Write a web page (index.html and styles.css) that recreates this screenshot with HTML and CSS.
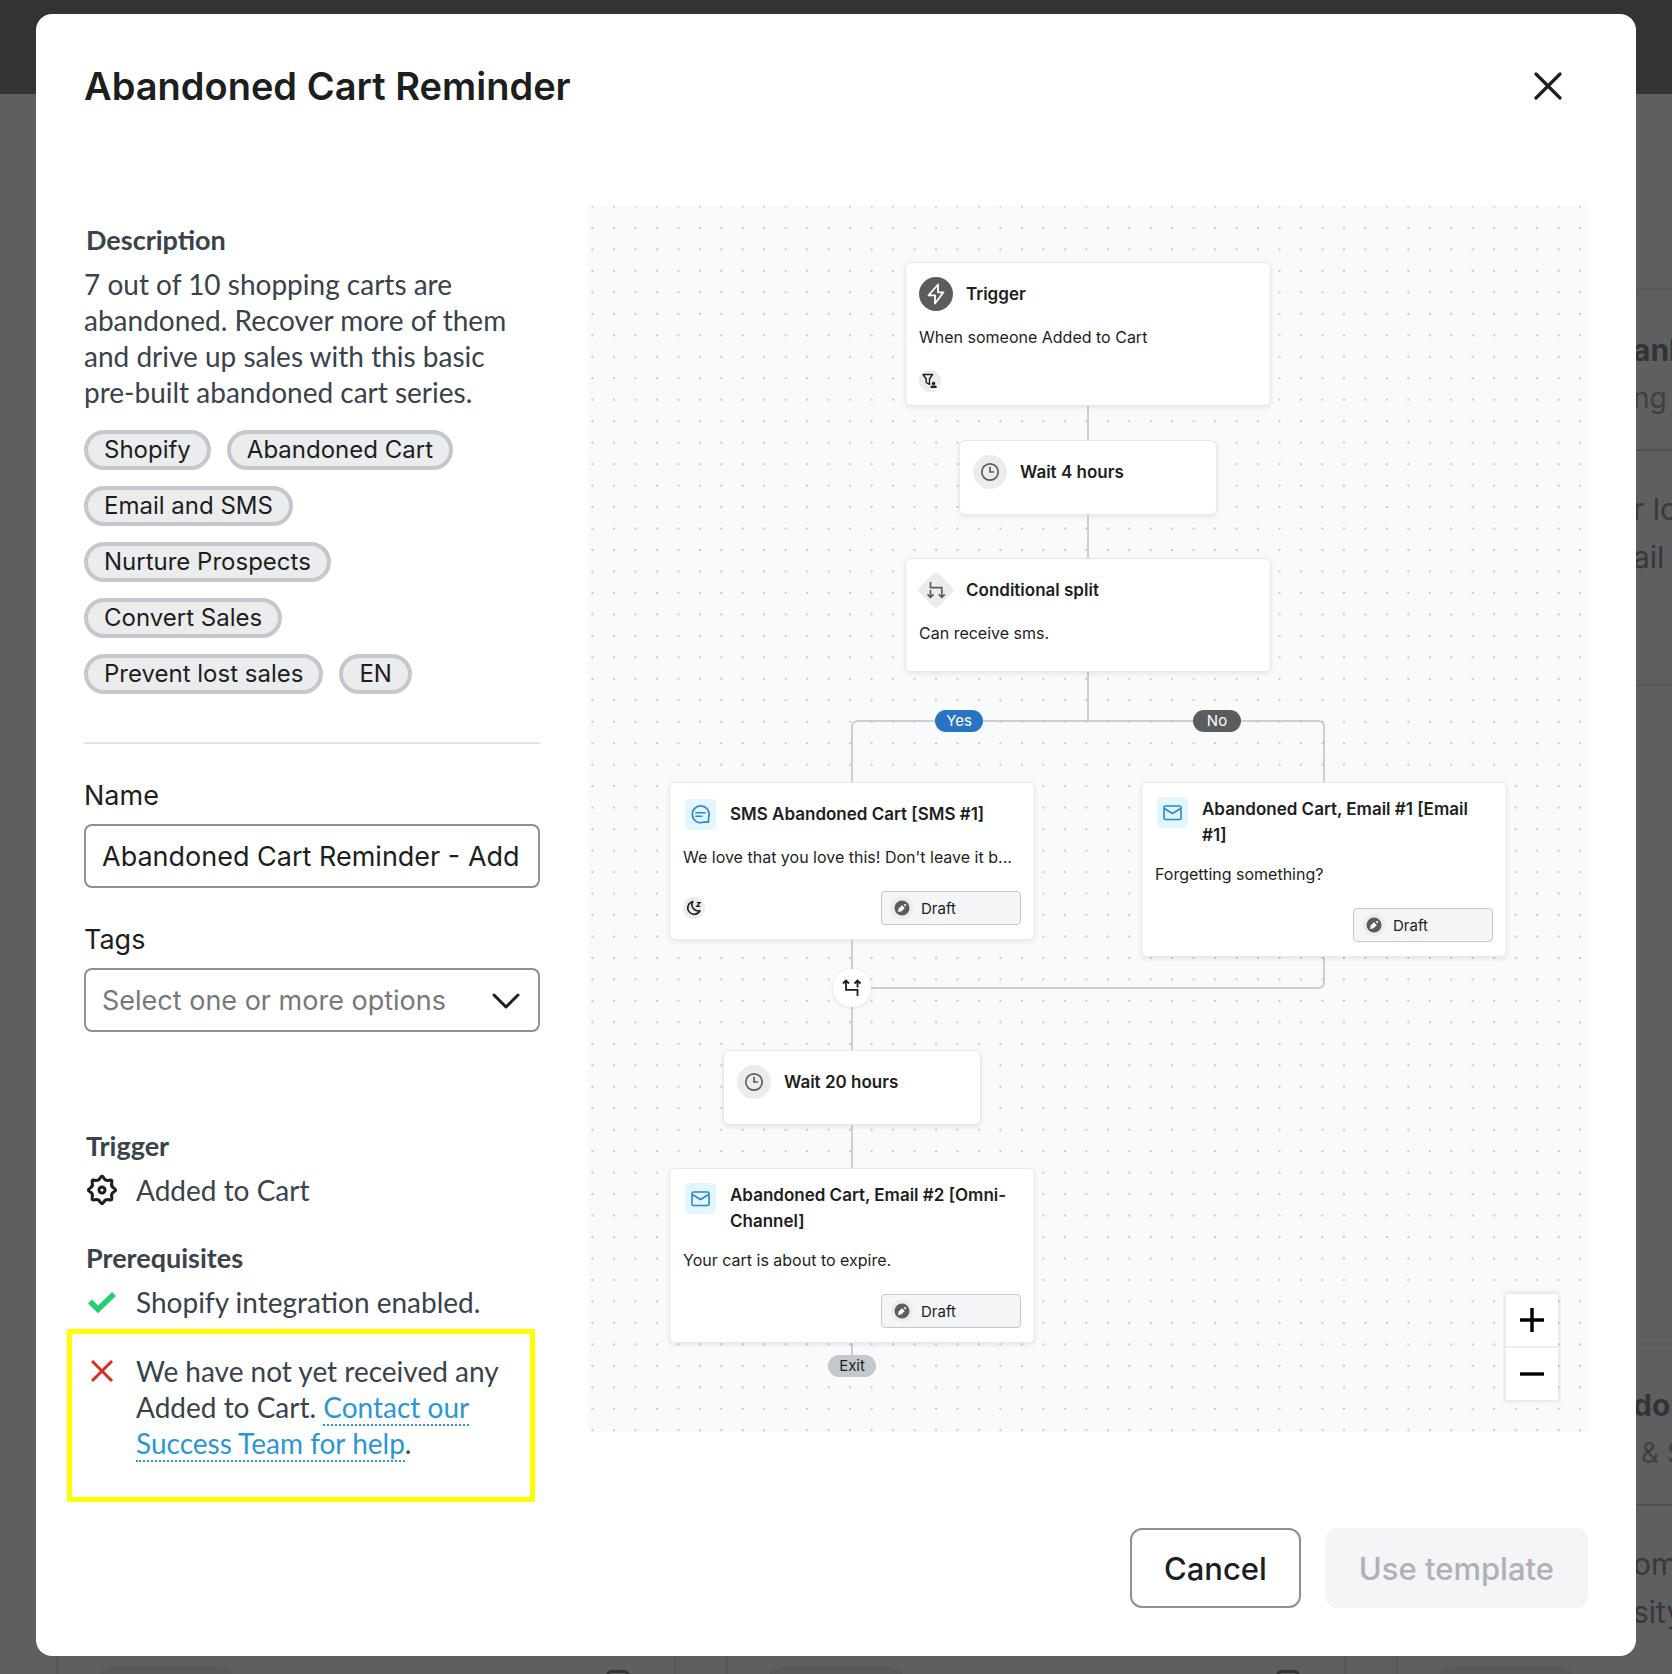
FILE: index.html
```html
<!DOCTYPE html>
<html lang="en">
<head>
    <meta charset="UTF-8">
    <meta name="viewport" content="width=device-width, initial-scale=1.0">
    <title>Abandoned Cart Reminder</title>
    <link rel="stylesheet" href="styles.css">
</head>
<body>
    <!-- Dimmed page behind the dialog -->
    <div class="page" aria-hidden="true">
        <div class="page-header"></div>
        <div class="page-toolbar"></div>
        <div class="page-cards">
            <div class="page-card short"></div>
            <div class="page-card short"></div>
            <div class="page-card short">
                <div class="page-card-head">
                    <div class="page-card-title">ank</div>
                    <div class="page-card-type">ng</div>
                </div>
                <div class="page-card-text">r lo<br>ail p</div>
            </div>
            <div class="page-card tall">
                <div class="page-card-foot"><span class="page-pill"></span><span class="page-box"></span></div>
            </div>
            <div class="page-card tall">
                <div class="page-card-foot"><span class="page-pill"></span><span class="page-box"></span></div>
            </div>
            <div class="page-card tall">
                <div class="page-card-head">
                    <div class="page-card-title">don</div>
                    <div class="page-card-type">&nbsp;&amp; S</div>
                </div>
                <div class="page-card-text">ome<br>sity</div>
                <div class="page-card-foot"><span class="page-pill"></span></div>
            </div>
        </div>
    </div>

    <div class="modal" role="dialog" aria-labelledby="modal-title">
        <header class="modal-header">
            <h1 id="modal-title">Abandoned Cart Reminder</h1>
            <button class="close" type="button" aria-label="Close">
                <svg width="28" height="28" viewBox="0 0 28 28"><path d="M2 2l24 24M26 2L2 26" fill="none" stroke="#1d1e20" stroke-width="3.2" stroke-linecap="round"/></svg>
            </button>
        </header>

        <div class="modal-body">
            <section class="details">
                <h2>Description</h2>
                <p class="description">7 out of 10 shopping carts are abandoned. Recover more of them and drive up sales with this basic pre-built abandoned cart series.</p>
                <ul class="chips">
                    <li>Shopify</li>
                    <li>Abandoned Cart</li>
                    <li>Email and SMS</li>
                    <li>Nurture Prospects</li>
                    <li>Convert Sales</li>
                    <li>Prevent lost sales</li>
                    <li>EN</li>
                </ul>
                <hr>
                <div class="field">
                    <label for="name">Name</label>
                    <input id="name" type="text" value="Abandoned Cart Reminder - Add">
                </div>
                <div class="field">
                    <label for="tags">Tags</label>
                    <div class="select">
                        <select id="tags">
                            <option>Select one or more options</option>
                        </select>
                        <svg class="chevron" width="28" height="18" viewBox="0 0 28 18"><path d="M2 3l12 12L26 3" fill="none" stroke="#1d1e20" stroke-width="3" stroke-linecap="round" stroke-linejoin="round"/></svg>
                    </div>
                </div>

                <h2 class="trigger-title">Trigger</h2>
                <div class="item">
                    <svg class="item-icon" viewBox="-16 -16 32 32"><path d="M-1.8-12Q0-15.3 1.8-12Q3.6-8.7 7.2-9.75Q10.8-10.8 9.75-7.2Q8.7-3.6 12-1.8Q15.3 0 12 1.8Q8.7 3.6 9.75 7.2Q10.8 10.8 7.2 9.75Q3.6 8.7 1.8 12Q0 15.3-1.8 12Q-3.6 8.7-7.2 9.75Q-10.8 10.8-9.75 7.2Q-8.7 3.6-12 1.8Q-15.3 0-12-1.8Q-8.7-3.6-9.75-7.2Q-10.8-10.8-7.2-9.75Q-3.6-8.7-1.8-12z" fill="none" stroke="#1d1e20" stroke-width="3"/><circle r="3" fill="none" stroke="#1d1e20" stroke-width="3"/></svg>
                    <p>Added to Cart</p>
                </div>

                <h2 class="prereq-title">Prerequisites</h2>
                <div class="item">
                    <svg class="item-icon" viewBox="0 0 32 32"><path d="M4 15.500l8 8L28 8" fill="none" stroke="#23cf73" stroke-width="5.5"/></svg>
                    <p>Shopify integration enabled.</p>
                </div>
                <div class="item highlighted">
                    <svg class="item-icon" viewBox="0 0 32 32"><path d="M6 6l20 20M26 6L6 26" fill="none" stroke="#d4301c" stroke-width="3"/></svg>
                    <p>We have not yet received any Added to Cart. <a href="#">Contact our Success Team for help</a>.</p>
                </div>
            </section>

            <section class="canvas">
                <svg class="dots" width="100%" height="100%">
                    <defs>
                        <pattern id="dot" width="21.47" height="21.47" patternUnits="userSpaceOnUse" x="3.5" y="-0.5"><circle cx="1" cy="1" r="0.8" fill="#85888d"/></pattern>
                    </defs>
                    <rect width="100%" height="100%" fill="url(#dot)"/>
                </svg>

                <div class="flow">
                    <svg class="edges" width="1000" height="1226" viewBox="0 0 1000 1226" fill="none" stroke="#bfc1c4" stroke-width="1.5">
                        <path d="M500 190V514"/>
                        <path d="M264 590V521Q264 515 270 515H730Q736 515 736 521V590"/>
                        <path d="M264 700V1160"/>
                        <path d="M736 740V776Q736 782 730 782H264"/>
                    </svg>

                    <article class="node node-trigger">
                        <div class="node-head">
                            <span class="badge dark"><svg width="34" height="34" viewBox="0 0 34 34"><path d="M19 7.5L9.5 18.3H16V26.5L24.5 15.3H19z" fill="none" stroke="#fff" stroke-width="1.8" stroke-linejoin="round"/></svg></span>
                            <h3>Trigger</h3>
                        </div>
                        <p>When someone Added to Cart</p>
                        <div class="node-foot">
                            <span class="mini"><svg width="22" height="22" viewBox="0 0 22 22"><path d="M4 4.5h9.5L10.500 9v5.500L7.200 12.500V9z" fill="none" stroke="#1d1e20" stroke-width="1.4" stroke-linejoin="round"/><circle cx="14.6" cy="13.4" r="1.7" fill="#1d1e20"/><path d="M11.6 18v-1.200q0-1.400 1.500-1.400h3q1.500 0 1.500 1.400V18z" fill="#1d1e20"/></svg></span>
                        </div>
                    </article>

                    <article class="node node-wait node-wait-4">
                        <div class="node-head">
                            <span class="badge"><svg width="34" height="34" viewBox="0 0 34 34" fill="none" stroke="#5b5c5e" stroke-width="1.7"><circle cx="17" cy="17" r="8.2"/><path d="M17 11.8V17h4.2"/></svg></span>
                            <h3>Wait 4 hours</h3>
                        </div>
                    </article>

                    <article class="node node-split">
                        <div class="node-head">
                            <span class="badge diamond"><svg width="38" height="38" viewBox="0 0 38 38"><rect x="5.5" y="5.5" width="27" height="27" rx="4" transform="rotate(45 19 19)" fill="#ebecee"/><path d="M13.5 11v5.7h11.3V26M13.5 19v7M10.5 23.3l3 3 3-3M21.8 23.3l3 3 3-3" fill="none" stroke="#5b5c5e" stroke-width="1.7"/></svg></span>
                            <h3>Conditional split</h3>
                        </div>
                        <p>Can receive sms.</p>
                    </article>

                    <span class="label label-yes">Yes</span>
                    <span class="label label-no">No</span>

                    <article class="node node-sms">
                        <div class="node-head">
                            <span class="badge blue"><svg width="31" height="31" viewBox="0 0 31 31" fill="none" stroke="#2a84d2" stroke-width="1.6"><path d="M23.5 18.5a8.4 8.4 0 1 0-4.6 4.6h4.6z" stroke-linejoin="round"/><path d="M11 13.7h9M11 17.2h6" stroke-linecap="round"/></svg></span>
                            <h3>SMS Abandoned Cart [SMS #1]</h3>
                        </div>
                        <p>We love that you love this! Don't leave it b...</p>
                        <div class="node-foot">
                            <span class="mini"><svg width="22" height="22" viewBox="0 0 22 22"><path d="M9.8 4.5a6.5 6.5 0 1 0 7.3 9.2A6.3 6.3 0 0 1 9.8 4.5z" fill="none" stroke="#1d1e20" stroke-width="1.6" stroke-linejoin="round"/><path d="M13.8 5.700h3.200l-3.200 3.600h3.400" fill="none" stroke="#1d1e20" stroke-width="1.3"/></svg></span>
                            <span class="status"><svg width="22" height="22" viewBox="0 0 22 22"><circle cx="11" cy="11" r="11" fill="#ebecee"/><circle cx="11" cy="11" r="7.5" fill="#5b5c5e"/><path d="M7 15l.7-3.6 3.2-3.2 2.9 2.9-3.2 3.2z" fill="#fff"/><path d="M12.6 7.8l1.5-1 1.2 1.2-1 1.5z" fill="#fff"/></svg>Draft</span>
                        </div>
                    </article>

                    <article class="node node-email-1">
                        <div class="node-head two-lines">
                            <span class="badge blue"><svg width="31" height="31" viewBox="0 0 31 31" fill="none" stroke="#2a84d2" stroke-width="1.6"><rect x="7" y="9" width="17" height="13.5" rx="1.5"/><path d="M7.3 11.5l8.2 5 8.2-5"/></svg></span>
                            <h3>Abandoned Cart, Email #1 [Email #1]</h3>
                        </div>
                        <p>Forgetting something?</p>
                        <div class="node-foot">
                            <span class="status"><svg width="22" height="22" viewBox="0 0 22 22"><circle cx="11" cy="11" r="11" fill="#ebecee"/><circle cx="11" cy="11" r="7.5" fill="#5b5c5e"/><path d="M7 15l.7-3.6 3.2-3.2 2.9 2.9-3.2 3.2z" fill="#fff"/><path d="M12.6 7.8l1.5-1 1.2 1.2-1 1.5z" fill="#fff"/></svg>Draft</span>
                        </div>
                    </article>

                    <span class="merge"><svg width="20" height="20" viewBox="0 0 20 20" fill="none" stroke="#1d1e20" stroke-width="1.8"><path d="M4 2.5v9.3h11.5V18M15.5 2.5v7M1 5.5l3-3 3 3M12.5 5.5l3-3 3 3"/></svg></span>

                    <article class="node node-wait node-wait-20">
                        <div class="node-head">
                            <span class="badge"><svg width="34" height="34" viewBox="0 0 34 34" fill="none" stroke="#5b5c5e" stroke-width="1.7"><circle cx="17" cy="17" r="8.2"/><path d="M17 11.8V17h4.2"/></svg></span>
                            <h3>Wait 20 hours</h3>
                        </div>
                    </article>

                    <article class="node node-email-2">
                        <div class="node-head two-lines">
                            <span class="badge blue"><svg width="31" height="31" viewBox="0 0 31 31" fill="none" stroke="#2a84d2" stroke-width="1.6"><rect x="7" y="9" width="17" height="13.5" rx="1.5"/><path d="M7.3 11.5l8.2 5 8.2-5"/></svg></span>
                            <h3>Abandoned Cart, Email #2 [Omni-Channel]</h3>
                        </div>
                        <p>Your cart is about to expire.</p>
                        <div class="node-foot">
                            <span class="status"><svg width="22" height="22" viewBox="0 0 22 22"><circle cx="11" cy="11" r="11" fill="#ebecee"/><circle cx="11" cy="11" r="7.5" fill="#5b5c5e"/><path d="M7 15l.7-3.6 3.2-3.2 2.9 2.9-3.2 3.2z" fill="#fff"/><path d="M12.6 7.8l1.5-1 1.2 1.2-1 1.5z" fill="#fff"/></svg>Draft</span>
                        </div>
                    </article>

                    <span class="label label-exit">Exit</span>
                </div>

                <div class="zoom">
                    <button type="button" aria-label="Zoom in"><svg width="24" height="24" viewBox="0 0 24 24"><path d="M12 0v24M0 12h24" stroke="#000" stroke-width="3.4"/></svg></button>
                    <button type="button" aria-label="Zoom out"><svg width="24" height="24" viewBox="0 0 24 24"><path d="M0 12h24" stroke="#000" stroke-width="3.4"/></svg></button>
                </div>
            </section>
        </div>

        <footer class="modal-footer">
            <button class="btn cancel" type="button">Cancel</button>
            <button class="btn use" type="button" disabled>Use template</button>
        </footer>
    </div>
</body>
</html>
```
FILE: styles.css
```css
* {
    box-sizing: border-box;
}

body {
    margin: 0;
    background-color: #5e5f61;
    font-family: Inter, "Liberation Sans", sans-serif;
    color: #1d1e20;
    display: flow-root;
    position: relative;
}

h1, h2, h3, p, ul {
    margin: 0;
    padding: 0;
}

button {
    font-family: inherit;
    cursor: pointer;
}

/* Page behind the dialog */
.page {
    position: absolute;
    inset: 0;
    overflow: hidden;
    color: #3e3f42;
}

.page-header {
    height: 94px;
    background-color: #323335;
}

.page-toolbar {
    height: 193px;
    border-bottom: 1px solid #5a5b5d;
}

.page-cards {
    display: grid;
    grid-template-columns: repeat(3, 620px);
    grid-template-rows: 398px 400px;
    column-gap: 50px;
    row-gap: 657px;
    margin: 1px 0 0 56px;
}

.page-card {
    border: 2px solid #58595b;
    border-radius: 8px;
    display: flex;
    flex-direction: column;
}

.page-card-head {
    height: 161px;
    padding: 36px 0 0 235px;
    border-bottom: 2px solid #505153;
}

.page-card-title {
    font-size: 30px;
    font-weight: 700;
    line-height: 48px;
    color: #323335;
}

.page-card-type {
    font-size: 28px;
    line-height: 48px;
}

.page-card-text {
    padding: 34px 0 0 235px;
    font-size: 30px;
    line-height: 48px;
    color: #37383a;
}

.page-card-foot {
    display: flex;
    justify-content: space-between;
    margin-top: auto;
    padding: 0 44px 34px 36px;
}

.page-pill {
    width: 144px;
    height: 40px;
    border-radius: 20px;
    background-color: #58595b;
}

.page-box {
    width: 24px;
    height: 32px;
    margin-top: 3px;
    border: 3px solid #323335;
    border-radius: 6px;
}

/* Dialog */
.modal {
    position: relative;
    margin: 14px 36px 18px;
    padding: 48px;
    background-color: #fff;
    border-radius: 16px;
}

.modal-header {
    display: flex;
    justify-content: space-between;
    align-items: center;
    height: 48px;
    margin-bottom: 96px;
}

.modal-header h1 {
    font-size: 38px;
    font-weight: 600;
    line-height: 48px;
}

.close {
    display: flex;
    padding: 10px;
    margin-right: 16px;
    border: none;
    background: none;
}

.modal-body {
    display: grid;
    grid-template-columns: 456px 1fr;
    column-gap: 48px;
}

/* Left column */
.details {
    padding-top: 16px;
}

.details h2,
.details p {
    font-family: Lato, "Open Sans", sans-serif;
    font-size: 28px;
    line-height: 36px;
    color: #3a424b;
}

.details h2 {
    font-size: 27px;
    font-weight: 700;
    margin-bottom: 8px;
    padding-left: 2px;
}

.description {
    padding-right: 20px;
}

.chips {
    display: flex;
    flex-wrap: wrap;
    gap: 16px;
    margin-top: 20px;
    padding-right: 60px;
    list-style: none;
}

.chips li {
    padding: 0 16px;
    border: 4px solid #c3c8ce;
    border-radius: 20px;
    background-color: #ebecee;
    font-size: 24px;
    line-height: 32px;
}

.details hr {
    height: 2px;
    margin: 48px 0 0;
    border: none;
    background-color: #dfe3e6;
}

.field {
    margin-top: 36px;
}

.field label {
    display: block;
    margin-bottom: 12px;
    font-size: 27px;
    line-height: 32px;
}

.field input,
.field select {
    display: block;
    width: 100%;
    height: 64px;
    padding: 0 16px;
    border: 2px solid #8f8f8f;
    border-radius: 8px;
    background-color: #fff;
    font-family: inherit;
    font-size: 27px;
    color: #1d1e20;
}

.field select {
    appearance: none;
    color: #77787a;
}

.select {
    position: relative;
}

.chevron {
    position: absolute;
    right: 20px;
    top: 24px;
    pointer-events: none;
}

.trigger-title {
    margin-top: 96px;
}

.prereq-title {
    margin-top: 32px;
}

.item {
    display: flex;
    gap: 18px;
    padding-left: 2px;
}

.item-icon {
    flex: none;
    width: 32px;
    height: 32px;
    margin-top: 2px;
}

.item a {
    color: #2b96d6;
    text-decoration: none;
    border-bottom: 2px dotted #2b96d6;
}

.highlighted {
    margin: 9px 5px 0 -17px;
    padding: 19px 12px 36px 14px;
    border: 5px solid #ffff00;
}

/* Flow canvas */
.canvas {
    position: relative;
    height: 1226px;
    background-color: #f9fafc;
    overflow: hidden;
}

.dots {
    position: absolute;
    inset: 0;
}

.flow {
    position: relative;
    width: 1000px;
    margin: 0 auto;
}

.edges {
    position: absolute;
    left: 0;
    top: 0;
}

.node {
    position: absolute;
    width: 366px;
    padding: 13px;
    border: 1px solid #e6e8ea;
    border-radius: 6px;
    background-color: #fff;
    box-shadow: 0 2px 5px rgba(0, 0, 0, 0.08);
}

.node-trigger {
    left: 317px;
    top: 56px;
    height: 144px;
}

.node-wait {
    width: 258px;
    height: 75px;
}

.node-wait-4 {
    left: 371px;
    top: 234px;
}

.node-split {
    left: 317px;
    top: 352px;
    height: 114px;
}

.node-sms {
    left: 81px;
    top: 576px;
    height: 158px;
}

.node-email-1 {
    left: 553px;
    top: 576px;
    height: 175px;
}

.node-wait-20 {
    left: 135px;
    top: 844px;
}

.node-email-2 {
    left: 81px;
    top: 962px;
    height: 175px;
}

.node-head {
    display: flex;
    align-items: center;
    gap: 13px;
    height: 36px;
}

.node-head h3 {
    font-size: 17px;
    font-weight: 600;
    line-height: 26px;
}

.node-head.two-lines {
    align-items: flex-start;
    height: 53px;
}

.node p {
    margin-top: 12px;
    font-size: 16px;
    line-height: 26px;
    white-space: nowrap;
}

.badge {
    flex: none;
    display: flex;
    width: 34px;
    height: 34px;
    border-radius: 50%;
    background-color: #ebecee;
}

.badge.dark {
    background-color: #5b5c5e;
}

.badge.diamond {
    justify-content: center;
    align-items: center;
    background: none;
}

.badge.diamond svg {
    flex: none;
}

.badge.blue {
    width: 31px;
    height: 31px;
    margin: 1px 1px 0 2px;
    border-radius: 5px;
    background-color: #e1f6ff;
}

.node-foot {
    display: flex;
    align-items: center;
    height: 34px;
    margin-top: 21px;
}

.node-trigger .node-foot {
    margin-top: 14px;
}

.mini {
    display: flex;
    width: 22px;
    height: 22px;
    border-radius: 50%;
    background-color: #ebecee;
}

.status {
    display: flex;
    align-items: center;
    gap: 8px;
    width: 140px;
    height: 34px;
    margin-left: auto;
    padding-left: 9px;
    border: 1px solid #c3c8ce;
    border-radius: 4px;
    background-color: #f4f5f7;
    font-size: 15px;
}

.label {
    position: absolute;
    width: 48px;
    border-radius: 11px;
    font-size: 15px;
    line-height: 22px;
    text-align: center;
}

.label-yes {
    left: 347px;
    top: 504px;
    background-color: #2873c2;
    color: #fff;
}

.label-no {
    left: 605px;
    top: 504px;
    background-color: #5b5c5e;
    color: #fff;
}

.label-exit {
    left: 240px;
    top: 1149px;
    background-color: #c3c8ce;
}

.merge {
    position: absolute;
    left: 245px;
    top: 763px;
    display: flex;
    justify-content: center;
    align-items: center;
    width: 38px;
    height: 38px;
    border-radius: 50%;
    background-color: #fff;
    box-shadow: 0 1px 4px rgba(0, 0, 0, 0.1);
}

.zoom {
    position: absolute;
    right: 30px;
    bottom: 32px;
    display: flex;
    flex-direction: column;
    gap: 2px;
    background-color: #eee;
    box-shadow: 0 0 3px 2px rgba(0, 0, 0, 0.08);
}

.zoom button {
    display: flex;
    justify-content: center;
    align-items: center;
    width: 52px;
    height: 52px;
    border: none;
    background-color: #fff;
}

/* Footer */
.modal-footer {
    display: flex;
    justify-content: flex-end;
    gap: 24px;
    margin-top: 26px;
}

.btn {
    height: 80px;
    padding: 0 32px;
    border: 2px solid #8f8f8f;
    border-radius: 12px;
    background-color: #fff;
    color: #1d1e20;
    font-size: 31px;
    font-weight: 500;
}

.btn.use {
    border-color: #f4f5f7;
    background-color: #f4f5f7;
    color: #afb1b6;
}
```
